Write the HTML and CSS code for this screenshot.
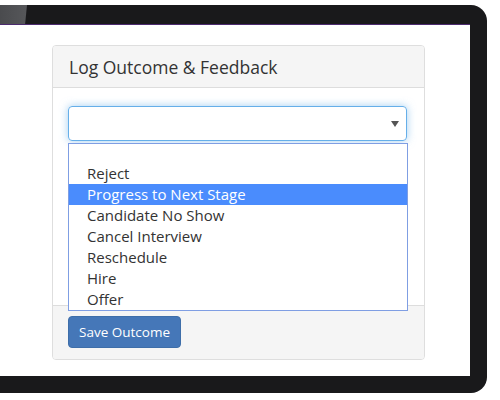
FILE: index.html
```html
<!DOCTYPE html>
<html>
<head>
<meta charset="utf-8">
<link rel="stylesheet" href="styles.css">
</head>
<body>
<div class="device">
  <div class="topbar"><div class="tab"></div></div>
  <div class="screen">
    <div class="panel">
      <div class="panel-heading">Log Outcome &amp; Feedback</div>
      <div class="panel-body">
        <div class="select-wrap">
          <div class="select">
            <svg class="caret" width="8" height="6" viewBox="0 0 8 6"><path d="M0 0h8L4 6z" fill="#555"/></svg>
          </div>
          <ul class="dropdown">
            <li class="empty"></li>
            <li>Reject</li>
            <li class="active">Progress to Next Stage</li>
            <li>Candidate No Show</li>
            <li>Cancel Interview</li>
            <li>Reschedule</li>
            <li>Hire</li>
            <li>Offer</li>
          </ul>
        </div>
      </div>
      <div class="panel-footer">
        <button class="btn">Save Outcome</button>
      </div>
    </div>
  </div>
</div>
</body>
</html>
```
FILE: styles.css
```css
* { box-sizing: border-box; }
html, body { margin: 0; padding: 0; background: #fff; }
body { font-family: "Open Sans", "Noto Sans", sans-serif; color: #333; }

.device {
  margin-top: 5px;
  width: 487px;
  height: 388px;
  background: #19191b;
  border-radius: 0 16px 16px 0;
  padding: 0 17px 17px 0;
  display: flex;
  flex-direction: column;
}
.topbar { height: 19px; display: flex; }
.tab {
  width: 27px;
  height: 19px;
  background: linear-gradient(90deg, #4a4b4e, #56575a);
  clip-path: polygon(0 0, 100% 0, 93% 100%, 0 100%);
}
.screen {
  flex: 1;
  background: #fff;
  border-top: 1.5px solid #4b2a6e;
  padding: 20px 0 0 52px;
}
.panel {
  width: 373px;
  border: 1px solid #dedede;
  border-radius: 4px;
  background: #fff;
}
.panel-heading {
  height: 42px;
  background: #f5f5f5;
  border-bottom: 1px solid #dddddd;
  border-radius: 3px 3px 0 0;
  padding: 0 16px;
  font-size: 17.5px;
  line-height: 42px;
  color: #333;
}
.panel-body {
  height: 217px;
  padding: 18px 17px 0 15px;
}
.select-wrap { position: relative; }
.select {
  height: 35px;
  border: 1px solid #66afe9;
  border-radius: 4px;
  box-shadow: 0 0 8px rgba(102, 175, 233, 0.6);
  display: flex;
  align-items: center;
  justify-content: flex-end;
  padding-right: 7px;
}
.caret { display: block; margin-top: 1px; }
.dropdown {
  position: absolute;
  left: 0;
  right: -1px;
  top: 37px;
  margin: 0;
  padding: 0;
  list-style: none;
  background: #fff;
  border: 1px solid #7f9ee3;
  z-index: 2;
}
.dropdown li {
  height: 21px;
  line-height: 21px;
  padding-left: 18px;
  font-size: 15px;
  color: #333;
  white-space: nowrap;
}
.dropdown li.empty { height: 19px; }
.dropdown li.active { background: #4a8cfd; color: #fff; }

.panel-footer {
  background: #f5f5f5;
  border-top: 1px solid #dddddd;
  border-radius: 0 0 3px 3px;
  padding: 10px 15px 11px;
}
.btn {
  width: 113px;
  height: 32px;
  background: #4577b8;
  border: 1px solid #3e6ea9;
  border-radius: 4px;
  color: #fff;
  font-family: "Open Sans", "Noto Sans", sans-serif;
  font-size: 13.5px;
  padding: 0;
  display: block;
}
```
